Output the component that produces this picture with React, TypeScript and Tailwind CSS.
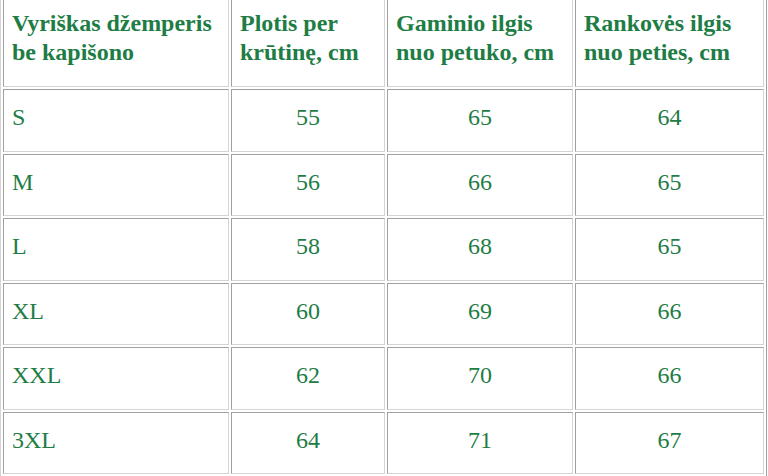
const headers = [
  ["Vyriškas džemperis", "be kapišono"],
  ["Plotis per", "krūtinę, cm"],
  ["Gaminio ilgis", "nuo petuko, cm"],
  ["Rankovės ilgis", "nuo peties, cm"],
];

const rows = [
  ["S", "55", "65", "64"],
  ["M", "56", "66", "65"],
  ["L", "58", "68", "65"],
  ["XL", "60", "69", "66"],
  ["XXL", "62", "70", "66"],
  ["3XL", "64", "71", "67"],
];

const widths = ["w-[226px]", "w-[154px]", "w-[186px]", "w-[189px]"];

const cell =
  "border border-t-[#a0a0a0] border-l-[#a0a0a0] border-b-[#d4d4d4] border-r-[#d4d4d4] px-[8px]";

export default function App() {
  return (
    <div className="h-[476px] w-[768px] overflow-hidden bg-white font-['Liberation_Serif','Times_New_Roman',serif] text-[24px] text-[#1e7d45]">
      {/* top of the table is scrolled out of view in the reference */}
      <table className="-mt-[14px] w-[767px] table-fixed border-separate border-spacing-[2px] border border-t-[#d4d4d4] border-l-[#d4d4d4] border-b-[#a0a0a0] border-r-[#a0a0a0]">
        <thead>
          <tr>
            {headers.map((h, i) => (
              <th
                key={i}
                className={`${cell} ${widths[i]} pt-[19px] pb-[19px] text-left align-middle font-bold leading-[29px]`}
              >
                {h[0]}
                <br />
                {h[1]}
              </th>
            ))}
          </tr>
        </thead>
        <tbody>
          {rows.map((r) => (
            <tr key={r[0]}>
              {r.map((v, i) => (
                <td
                  key={i}
                  className={`${cell} h-[62.5px] pb-[5px] align-middle leading-[27px] ${i === 0 ? "text-left" : "text-center"}`}
                >
                  {v}
                </td>
              ))}
            </tr>
          ))}
        </tbody>
      </table>
    </div>
  );
}
